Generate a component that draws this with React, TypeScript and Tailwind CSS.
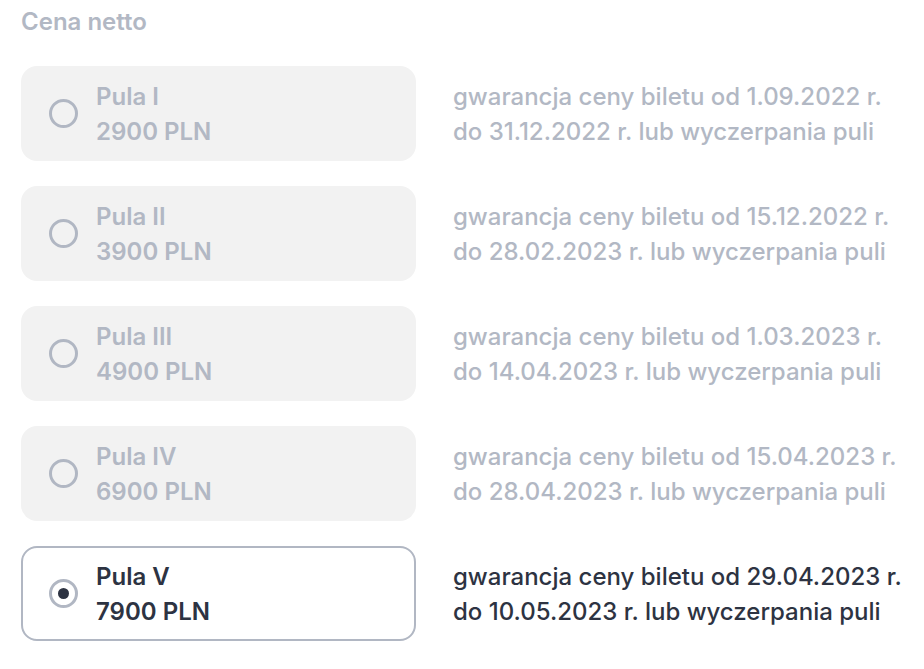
const pools = [
  { name: "Pula I", price: "2900 PLN", from: "1.09.2022", to: "31.12.2022" },
  { name: "Pula II", price: "3900 PLN", from: "15.12.2022", to: "28.02.2023" },
  { name: "Pula III", price: "4900 PLN", from: "1.03.2023", to: "14.04.2023" },
  { name: "Pula IV", price: "6900 PLN", from: "15.04.2023", to: "28.04.2023" },
  { name: "Pula V", price: "7900 PLN", from: "29.04.2023", to: "10.05.2023" },
];

const App = () => {
  const active = 4;
  return (
    <div className="min-h-[669px] bg-white font-['Inter',sans-serif] px-[21px] pt-[6px]">
      <h2 className="text-[24px] leading-[32px] font-semibold text-[#b2b8c4]">Cena netto</h2>
      <div className="mt-[28px] flex flex-col gap-[25px]">
        {pools.map((p, i) => {
          const on = i === active;
          return (
            <div key={p.name} className="flex items-center gap-[37px]">
              <div
                className={
                  on
                    ? "flex h-[95px] w-[395px] shrink-0 items-center rounded-2xl border-2 border-[#b1b7c3] bg-white pl-[26px]"
                    : "flex h-[95px] w-[395px] shrink-0 items-center rounded-2xl bg-[#f2f2f2] pl-[28px]"
                }
              >
                <span className="flex h-[29px] w-[29px] items-center justify-center rounded-full border-[3px] border-[#b1b7c3]">
                  {on && <span className="h-[11px] w-[11px] rounded-full bg-[#2d3342]" />}
                </span>
                <div
                  className={
                    "ml-[18px] text-[24px] leading-[35px] font-semibold " +
                    (on ? "text-[#2d3342]" : "text-[#b2b8c4]")
                  }
                >
                  <div>{p.name}</div>
                  <div>{p.price}</div>
                </div>
              </div>
              <div
                className={
                  "whitespace-nowrap text-[24px] leading-[35px] font-medium " +
                  (on ? "text-[#2d3342]" : "text-[#b2b8c4]")
                }
              >
                <div>gwarancja ceny biletu od {p.from} r.</div>
                <div>do {p.to} r. lub wyczerpania puli</div>
              </div>
            </div>
          );
        })}
      </div>
    </div>
  );
};

export default App;
